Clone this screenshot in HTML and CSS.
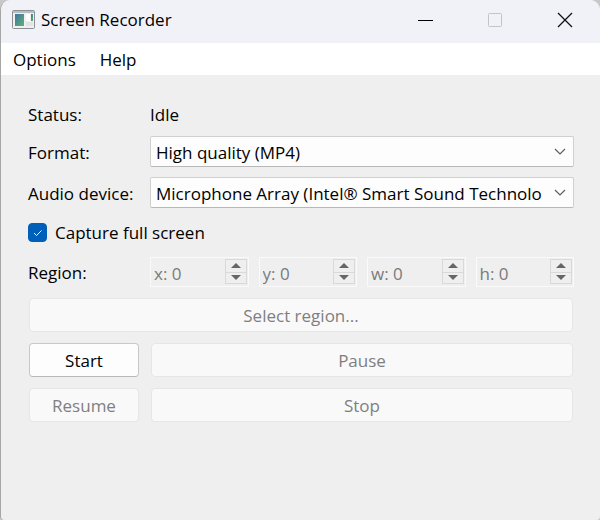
FILE: index.html
```html
<!DOCTYPE html>
<html lang="en">
  <head>
    <meta charset="UTF-8" />
    <meta name="viewport" content="width=device-width, initial-scale=1.0" />
    <title>Screen Recorder</title>
    <link rel="stylesheet" href="styles.css">
  </head>
  <body>
    <div class="window">
      <header class="titlebar">
        <svg class="app-icon" width="24" height="20" viewBox="0 0 24 20" aria-hidden="true">
          <defs>
            <linearGradient id="screen" x1="0" y1="0" x2="1" y2="1">
              <stop offset="0" stop-color="#3f74a6" />
              <stop offset="1" stop-color="#5fb36f" />
            </linearGradient>
          </defs>
          <rect x="0.5" y="0.5" width="22" height="18" rx="1" fill="#eef0f1" stroke="#8b8f93" />
          <rect x="1" y="1" width="21" height="2" fill="#b9bdc2" />
          <rect x="3" y="4" width="9" height="12" fill="url(#screen)" />
          <rect x="14" y="4" width="4" height="7" fill="#fff" />
          <rect x="19" y="4" width="2" height="7" fill="url(#screen)" />
          <rect x="14" y="12" width="7" height="4" fill="#e2e3e4" />
        </svg>
        <h1>Screen Recorder</h1>
        <div class="caption-buttons">
          <button type="button" aria-label="Minimize">
            <svg width="16" height="16" viewBox="0 0 16 16"><path d="M1 8.5h15" stroke="#000" /></svg>
          </button>
          <button type="button" aria-label="Maximize" disabled>
            <svg width="16" height="16" viewBox="0 0 16 16"><rect x="1.500" y="1.500" width="13" height="13" rx="1" fill="none" stroke="#c3c4c9" /></svg>
          </button>
          <button type="button" aria-label="Close">
            <svg width="16" height="16" viewBox="0 0 16 16"><path d="M1 1l14 14M15 1L1 15" stroke="#111" stroke-width="1.3" /></svg>
          </button>
        </div>
      </header>

      <nav class="menubar">
        <a href="#options">Options</a>
        <a href="#help">Help</a>
      </nav>

      <form class="content">
        <span class="label">Status:</span>
        <output class="label">Idle</output>

        <label class="label" for="format">Format:</label>
        <div class="combo">
          <select id="format">
            <option>High quality (MP4)</option>
          </select>
          <svg width="12" height="8" viewBox="0 0 12 8"><path d="M1 1l5 5 5-5" fill="none" stroke="#5c5c5c" stroke-width="1.2" /></svg>
        </div>

        <label class="label" for="audio">Audio device:</label>
        <div class="combo">
          <select id="audio">
            <option>Microphone Array (Intel® Smart Sound Technolo</option>
          </select>
          <svg width="12" height="8" viewBox="0 0 12 8"><path d="M1 1l5 5 5-5" fill="none" stroke="#5c5c5c" stroke-width="1.2" /></svg>
        </div>

        <label class="check wide">
          <input type="checkbox" checked />
          <svg width="19" height="19" viewBox="0 0 19 19"><path d="M6 10l2.500 2.500 5-5" fill="none" stroke="#fff" /></svg>
          Capture full screen
        </label>

        <span class="label">Region:</span>
        <div class="region">
          <div class="spin">
            <input type="text" value="x: 0" aria-label="Region x" disabled />
            <div class="steps">
              <button type="button" class="up" aria-label="Increase x" disabled></button>
              <button type="button" class="down" aria-label="Decrease x" disabled></button>
            </div>
          </div>
          <div class="spin">
            <input type="text" value="y: 0" aria-label="Region y" disabled />
            <div class="steps">
              <button type="button" class="up" aria-label="Increase y" disabled></button>
              <button type="button" class="down" aria-label="Decrease y" disabled></button>
            </div>
          </div>
          <div class="spin">
            <input type="text" value="w: 0" aria-label="Region width" disabled />
            <div class="steps">
              <button type="button" class="up" aria-label="Increase width" disabled></button>
              <button type="button" class="down" aria-label="Decrease width" disabled></button>
            </div>
          </div>
          <div class="spin">
            <input type="text" value="h: 0" aria-label="Region height" disabled />
            <div class="steps">
              <button type="button" class="up" aria-label="Increase height" disabled></button>
              <button type="button" class="down" aria-label="Decrease height" disabled></button>
            </div>
          </div>
        </div>

        <button type="button" class="btn wide" disabled>Select region...</button>
        <button type="button" class="btn">Start</button>
        <button type="button" class="btn" disabled>Pause</button>
        <button type="button" class="btn" disabled>Resume</button>
        <button type="button" class="btn" disabled>Stop</button>
      </form>
    </div>
  </body>
</html>
```
FILE: styles.css
```css
* {
  box-sizing: border-box;
}

body {
  margin: 0;
  background-color: #c8c8c8;
  color: #000;
  font-family: "Open Sans", "Noto Sans", sans-serif;
  font-size: 17px;
  line-height: 22px;
}

button,
input,
select {
  margin: 0;
  font: inherit;
  color: inherit;
}

.window {
  display: flex;
  flex-direction: column;
  min-height: 100vh;
  border-left: 1px solid #a6a6a6;
  border-radius: 10px 10px 4px 4px;
  background-color: #efefef;
  overflow: hidden;
}

/* Title bar */
.titlebar {
  display: flex;
  align-items: center;
  height: 43px;
  padding: 0 0 3px 11px;
  background-color: #f1f2f8;
}

.titlebar h1 {
  flex: 1;
  margin: 0 0 0 5px;
  font-size: 17px;
  font-weight: 400;
}

.caption-buttons {
  display: flex;
  align-self: stretch;
}

.caption-buttons button {
  display: flex;
  align-items: center;
  justify-content: center;
  width: 70px;
  padding: 0;
  border: 0;
  background: none;
}

/* Menu bar */
.menubar {
  display: flex;
  gap: 24px;
  height: 32px;
  padding: 6px 12px 4px;
  background-color: #fff;
}

.menubar a {
  color: inherit;
  text-decoration: none;
}

/* Form */
.content {
  display: grid;
  grid-template-columns: 112px minmax(0, 1fr);
  gap: 10px;
  align-items: center;
  padding: 27px 26px 27px 27px;
}

.label {
  padding-top: 2px;
  white-space: nowrap;
}

.wide {
  grid-column: 1 / -1;
}

.combo {
  display: grid;
  align-items: center;
}

.combo select,
.combo svg {
  grid-area: 1 / 1;
}

.combo select {
  width: 100%;
  height: 31px;
  padding: 2px 30px 0 5px;
  border: 1px solid #d0d0d0;
  border-bottom-color: #b8b8b8;
  border-radius: 2px;
  background-color: #fdfdfd;
  appearance: none;
}

.combo svg {
  justify-self: end;
  margin-right: 8px;
  pointer-events: none;
}

.check {
  display: grid;
  grid-template-columns: 19px 1fr;
  column-gap: 8px;
  align-items: center;
  height: 29px;
}

.check input,
.check svg {
  grid-area: 1 / 1;
}

.check input {
  width: 19px;
  height: 19px;
  margin: 0;
  border: 1px solid #868686;
  border-radius: 4px;
  background-color: #fff;
  appearance: none;
}

.check input:checked {
  border-color: #005fb8;
  background-color: #005fb8;
}

.check svg {
  pointer-events: none;
}

.region {
  display: grid;
  grid-template-columns: repeat(4, minmax(0, 1fr));
  gap: 10px;
}

.spin {
  display: flex;
  height: 30px;
  padding: 1px 1px 2px;
  border: 1px solid #fafafa;
  color: #7a7a7a;
}

.spin input {
  flex: 1;
  min-width: 0;
  padding: 4px 0 0 2px;
  border: 0;
  background: none;
}

.steps {
  display: grid;
  grid-template-rows: 1fr 1fr;
  width: 22px;
  border: 1px solid #d9d9d9;
}

.steps button {
  display: flex;
  align-items: center;
  justify-content: center;
  padding: 0;
  border: 0;
  background: none;
}

.steps .down {
  border-top: 1px solid #d9d9d9;
}

.steps button::before {
  content: "";
  border: 5px solid transparent;
}

.steps .up::before {
  border-top-width: 0;
  border-bottom-color: #666;
}

.steps .down::before {
  border-bottom-width: 0;
  border-top-color: #666;
}

.btn {
  height: 34px;
  margin: 1px 1px 0;
  padding: 2px 12px 0;
  border: 1px solid #c8c8c8;
  border-bottom-color: #b8b8b8;
  border-radius: 4px;
  background-color: #fdfdfd;
}

.btn:disabled {
  border-color: #e6e6e6;
  background-color: #f9f9f9;
  color: #7f7f7f;
}
```
